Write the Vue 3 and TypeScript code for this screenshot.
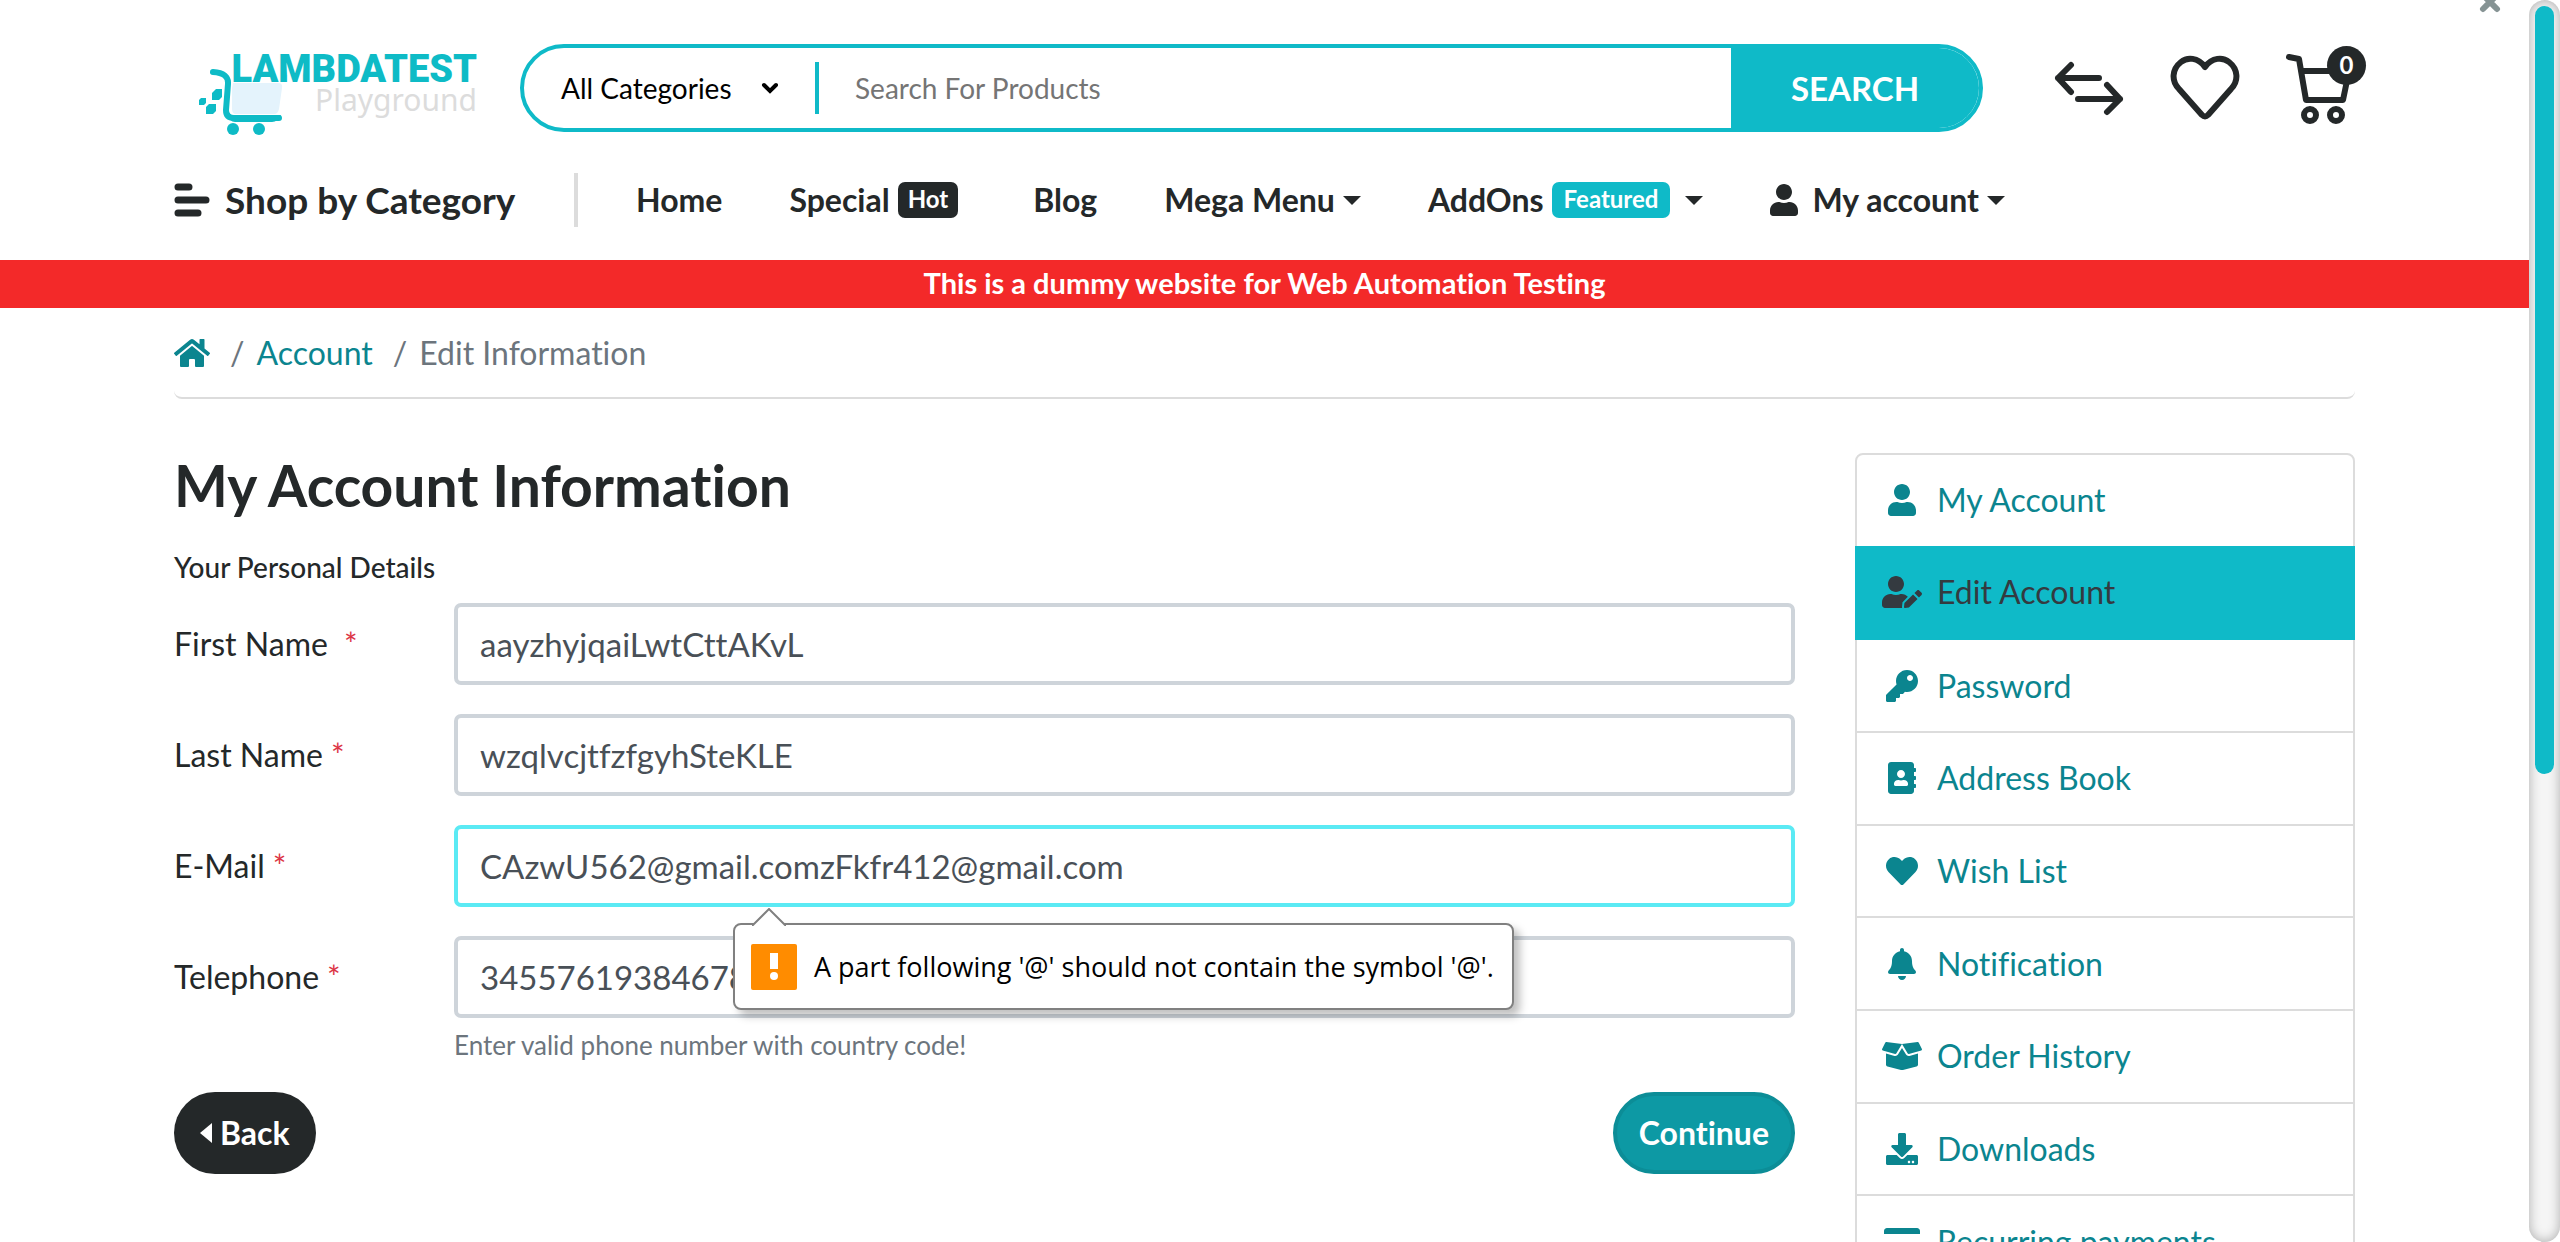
<script setup lang="ts">
interface NavItem {
  label: string
  badge?: string
  tone?: string
  caret?: boolean
  icon?: boolean
}

interface Field {
  id: string
  label: string
  type: string
  value: string
  hint?: string
  focused?: boolean
}

interface SideLink {
  label: string
  width: number
  path: string
  active?: boolean
}

const userPath =
  'M224 256c70.700 0 128-57.300 128-128S294.700 0 224 0 96 57.300 96 128s57.300 128 128 128zm89.600 32h-16.700c-22.200 10.200-46.900 16-72.900 16s-50.600-5.800-72.900-16h-16.700C60.200 288 0 348.200 0 422.400V464c0 26.500 21.500 48 48 48h352c26.500 0 48-21.500 48-48v-41.600c0-74.200-60.200-134.400-134.400-134.400z'

const nav: NavItem[] = [
  { label: 'Home' },
  { label: 'Special', badge: 'Hot', tone: 'dark' },
  { label: 'Blog' },
  { label: 'Mega Menu', caret: true },
  { label: 'AddOns', badge: 'Featured', tone: 'teal', caret: true },
  { label: 'My account', caret: true, icon: true },
]

const fields: Field[] = [
  { id: 'firstname', label: 'First Name ', type: 'text', value: 'aayzhyjqaiLwtCttAKvL' },
  { id: 'lastname', label: 'Last Name', type: 'text', value: 'wzqlvcjtfzfgyhSteKLE' },
  { id: 'email', label: 'E-Mail', type: 'text', value: 'CAzwU562@gmail.comzFkfr412@gmail.com', focused: true },
  {
    id: 'telephone',
    label: 'Telephone',
    type: 'tel',
    value: '3455761938467812',
    hint: 'Enter valid phone number with country code!',
  },
]

const links: SideLink[] = [
  { label: 'My Account', width: 448, path: userPath },
  {
    label: 'Edit Account',
    width: 640,
    active: true,
    path: 'M224 256c70.700 0 128-57.300 128-128S294.700 0 224 0 96 57.300 96 128s57.300 128 128 128zm89.600 32h-16.700c-22.200 10.200-46.900 16-72.900 16s-50.600-5.800-72.900-16h-16.700C60.200 288 0 348.200 0 422.400V464c0 26.500 21.500 48 48 48h274.900c-2.400-6.800-3.400-14-2.600-21.300l6.800-60.900 1.200-11.100 7.900-7.900 77.300-77.300c-24.500-27.700-60-45.500-99.900-45.500zm45.300 145.300l-6.800 61c-1.100 10.200 7.500 18.800 17.600 17.600l60.900-6.800 137.900-137.900-71.700-71.700-137.900 137.800zM633 268.900L595.100 231c-9.300-9.300-24.500-9.300-33.800 0l-37.800 37.800-4.100 4.100 71.800 71.700 41.800-41.800c9.300-9.400 9.300-24.500 0-33.900z',
  },
  {
    label: 'Password',
    width: 512,
    path: 'M512 176.001C512 273.203 433.202 352 336 352c-11.220 0-22.190-1.062-32.827-3.069l-24.012 27.014A23.999 23.999 0 0 1 261.223 384H224v40c0 13.255-10.745 24-24 24h-40v40c0 13.255-10.745 24-24 24H24c-13.255 0-24-10.745-24-24v-78.059c0-6.365 2.529-12.470 7.029-16.971l161.802-161.802C163.108 213.814 160 195.271 160 176 160 78.798 238.797.001 335.999 0 433.488-.001 512 78.511 512 176.001zM336 128c0 26.510 21.490 48 48 48s48-21.490 48-48-21.490-48-48-48-48 21.490-48 48z',
  },
  {
    label: 'Address Book',
    width: 448,
    path: 'M436 160c6.600 0 12-5.400 12-12v-40c0-6.600-5.400-12-12-12h-20V48c0-26.500-21.500-48-48-48H48C21.500 0 0 21.500 0 48v416c0 26.500 21.500 48 48 48h320c26.500 0 48-21.500 48-48v-48h20c6.600 0 12-5.400 12-12v-40c0-6.600-5.400-12-12-12h-20v-64h20c6.600 0 12-5.400 12-12v-40c0-6.600-5.400-12-12-12h-20v-64h20zm-228-32c35.300 0 64 28.700 64 64s-28.700 64-64 64-64-28.700-64-64 28.700-64 64-64zm112 236.800c0 10.600-10 19.200-22.400 19.200H118.400C106 384 96 375.400 96 364.800v-19.200c0-31.800 30.100-57.600 67.200-57.600h5c12.300 5.100 25.700 8 39.800 8s27.600-2.900 39.800-8h5c37.100 0 67.200 25.800 67.200 57.600v19.200z',
  },
  {
    label: 'Wish List',
    width: 512,
    path: 'M462.300 62.600C407.500 15.900 326 24.300 275.700 76.200L256 96.500l-19.700-20.300C186.100 24.300 104.500 15.900 49.700 62.600c-62.800 53.600-66.100 149.800-9.900 207.900l193.500 199.800c12.500 12.900 32.800 12.900 45.300 0l193.500-199.800c56.300-58.100 53-154.300-9.800-207.900z',
  },
  {
    label: 'Notification',
    width: 448,
    path: 'M224 512c35.320 0 63.970-28.650 63.970-64H160.030c0 35.350 28.650 64 63.970 64zm215.390-149.710c-19.320-20.760-55.470-51.990-55.470-154.290 0-77.700-54.480-139.900-127.940-155.160V32c0-17.670-14.320-32-31.980-32s-31.980 14.330-31.980 32v20.840C118.560 68.100 64.080 130.300 64.080 208c0 102.300-36.150 133.530-55.470 154.290-6 6.450-8.660 14.160-8.610 21.710.11 16.400 12.980 32 32.100 32h383.800c19.120 0 32-15.600 32.100-32 .05-7.550-2.610-15.270-8.610-21.710z',
  },
  {
    label: 'Order History',
    width: 640,
    path: 'M425.700 256c-16.900 0-32.800-9-41.400-23.400L320 126l-64.200 106.600c-8.700 14.500-24.600 23.500-41.500 23.500-4.500 0-9-.6-13.300-1.900L64 215v178c0 14.700 10 27.500 24.200 31l216.200 54.100c10.200 2.500 20.900 2.500 31 0L551.800 424c14.200-3.600 24.200-16.400 24.200-31V215l-137 39.100c-4.300 1.300-8.800 1.900-13.300 1.900zm212.600-112.200L586.800 41c-3.100-6.200-9.800-9.800-16.700-8.900L320 64l91.700 152.100c3.800 6.300 11.400 9.300 18.500 7.300l197.900-56.500c9.900-2.900 14.700-13.900 10.200-23.100zM53.200 41L1.700 143.800c-4.600 9.200.3 20.200 10.100 23l197.900 56.500c7.100 2 14.700-1 18.500-7.300L320 64 69.800 32.100c-6.900-.8-13.500 2.700-16.600 8.900z',
  },
  {
    label: 'Downloads',
    width: 512,
    path: 'M216 0h80c13.300 0 24 10.700 24 24v168h87.700c17.800 0 26.700 21.500 14.100 34.100L269.700 378.300c-7.500 7.500-19.800 7.500-27.300 0L90.100 226.100c-12.600-12.600-3.700-34.100 14.100-34.100H192V24c0-13.300 10.700-24 24-24zm296 376v112c0 13.300-10.700 24-24 24H24c-13.300 0-24-10.700-24-24V376c0-13.300 10.700-24 24-24h146.700l49 49c20.100 20.100 52.500 20.100 72.600 0l49-49H488c13.300 0 24 10.700 24 24zm-124 88c0-11-9-20-20-20s-20 9-20 20 9 20 20 20 20-9 20-20zm64 0c0-11-9-20-20-20s-20 9-20 20 9 20 20 20 20-9 20-20z',
  },
  {
    label: 'Recurring payments',
    width: 576,
    path: 'M0 432c0 26.500 21.500 48 48 48h480c26.500 0 48-21.500 48-48V256H0v176zm192-68c0-6.600 5.400-12 12-12h136c6.600 0 12 5.400 12 12v40c0 6.600-5.400 12-12 12H204c-6.600 0-12-5.400-12-12v-40zM576 80v48H0V80c0-26.500 21.500-48 48-48h480c26.500 0 48 21.500 48 48z',
  },
]
</script>

<template>
  <div class="shell">
    <div class="page">
      <button class="close" type="button" aria-label="Close">
        <svg viewBox="0 0 22 22" width="22" height="22"><path d="M4 4l14 14M18 4L4 18" /></svg>
      </button>

      <header class="header">
        <a class="logo" href="#" aria-label="LambdaTest Playground">
          <svg class="logo-cart" viewBox="0 0 86 70" width="86" height="70">
            <path d="M36 15h45q5 0 4 5l-3 21q-1 5-5 5H39q-4 0-4-5V20z" fill="#e4f3fc" />
            <path d="M16 4q16 1 15 12l-2 26q0 8 8 8h45" class="cart-line" />
            <path d="M32 47h52q-3 7-9 7H38q-6 0-6-7z" />
            <circle cx="36" cy="61" r="6" />
            <circle cx="62" cy="61" r="6" />
            <path d="M19 21h6v8l-3 3h-7v-7z" />
            <path d="M4 30h5v5l-2 2H2v-5z" />
            <path d="M12 36h7v7l-3 3H9v-7z" />
          </svg>
          <span class="logo-name">LAMBDATEST</span>
          <span class="logo-sub">Playground</span>
        </a>

        <form class="search" @submit.prevent>
          <button class="category" type="button">
            All Categories
            <svg viewBox="0 0 18 12" width="18" height="12"><path d="M3 3l6 6 6-6" /></svg>
          </button>
          <input class="query" type="text" aria-label="Search For Products" placeholder="Search For Products" />
          <button class="go" type="submit">SEARCH</button>
        </form>

        <div class="tools">
          <a href="#" aria-label="Compare">
            <svg viewBox="0 0 70 70" width="70" height="70">
              <path d="M17 12L4 25l13 14M4 25h41M53 32l13 14-13 13M66 46H24" />
            </svg>
          </a>
          <a href="#" aria-label="Wish list">
            <svg viewBox="0 0 70 70" width="70" height="70">
              <path
                class="heart"
                d="M35 14C28 4 17 4 11 9C2 16 1 28 9 36L32 62q3 3 6 0L61 36C69 28 68 16 59 9C53 4 42 4 35 14z"
              />
            </svg>
          </a>
          <a class="cart" href="#" aria-label="Cart">
            <svg viewBox="0 0 70 78" width="70" height="78">
              <path d="M3 8l10 2 7 41h37l6-29H15" />
              <circle cx="24" cy="66" r="6" />
              <circle cx="50" cy="66" r="6" />
            </svg>
            <span class="count">0</span>
          </a>
        </div>
      </header>

      <nav class="nav">
        <a class="shop" href="#">
          <svg viewBox="0 0 36 34" width="36" height="34">
            <path d="M4 4h11M4 17h28M4 30h20" />
          </svg>
          Shop by Category
        </a>
        <ul class="menu">
          <li v-for="item in nav" :key="item.label">
            <a href="#">
              <svg v-if="item.icon" class="nav-user" viewBox="0 0 448 512" width="28" height="32"><path :d="userPath" /></svg>
              {{ item.label }}
              <span v-if="item.badge" class="badge" :class="item.tone">{{ item.badge }}</span>
              <span v-if="item.caret" class="caret" :class="{ far: item.badge }"></span>
            </a>
          </li>
        </ul>
      </nav>

      <p class="notice">This is a dummy website for Web Automation Testing</p>

      <main class="content">
        <ol class="crumbs">
          <li>
            <a href="#" aria-label="Home">
              <svg viewBox="0 0 576 512" width="36" height="32">
                <path
                  d="M280.370 148.260L96 300.110V464a16 16 0 0 0 16 16l112.060-.29a16 16 0 0 0 15.920-16V368a16 16 0 0 1 16-16h64a16 16 0 0 1 16 16v95.640a16 16 0 0 0 16 16.050L464 480a16 16 0 0 0 16-16V300L295.670 148.260a12.190 12.190 0 0 0-15.300 0zM571.600 251.470L488 182.560V44.050a12 12 0 0 0-12-12h-56a12 12 0 0 0-12 12v72.610L318.470 43a48 48 0 0 0-61 0L4.340 251.470a12 12 0 0 0-1.600 16.900l25.500 31A12 12 0 0 0 45.150 301l235.220-193.740a12.190 12.190 0 0 1 15.300 0L530.900 301a12 12 0 0 0 16.900-1.600l25.500-31a12 12 0 0 0-1.700-16.930z"
                />
              </svg>
            </a>
          </li>
          <li><a href="#">Account</a></li>
          <li>Edit Information</li>
        </ol>

        <div class="columns">
          <form class="account" novalidate @submit.prevent>
            <h1>My Account Information</h1>
            <fieldset>
              <legend>Your Personal Details</legend>
              <div v-for="field in fields" :key="field.id" class="row">
                <label :for="field.id"><span class="label-text">{{ field.label }}</span><span class="star">*</span></label>
                <div class="control">
                  <input :id="field.id" :type="field.type" :value="field.value" :class="{ focused: field.focused }" />
                  <small v-if="field.hint">{{ field.hint }}</small>
                  <div v-if="field.focused" class="bubble" role="alert">
                    <svg class="bubble-tip" viewBox="0 0 34 18" width="34" height="18">
                      <path d="M0 18L17 1l17 17" />
                    </svg>
                    <svg class="bubble-mark" viewBox="0 0 46 46" width="46" height="46">
                      <rect width="46" height="46" rx="2" fill="#ff8c00" />
                      <path d="M19 9h8v16h-8z" fill="#fff" />
                      <circle cx="23" cy="32" r="4" fill="#fff" />
                    </svg>
                    A part following '@' should not contain the symbol '@'.
                  </div>
                </div>
              </div>
            </fieldset>
            <div class="actions">
              <a class="back" href="#">
                <svg viewBox="0 0 12 20" width="12" height="20"><path d="M12 0v20L0 10z" /></svg>
                Back
              </a>
              <button class="continue" type="submit">Continue</button>
            </div>
          </form>

          <aside class="side">
            <a v-for="link in links" :key="link.label" href="#" :class="{ active: link.active }">
              <span class="side-icon">
                <svg :viewBox="`0 0 ${link.width} 512`" :width="link.width / 16" height="32"><path :d="link.path" /></svg>
              </span>
              {{ link.label }}
            </a>
          </aside>
        </div>
      </main>
    </div>

    <div class="track"><div class="thumb"></div></div>
  </div>
</template>

<style>
body {
  margin: 0;
  background: #fff;
}
</style>

<style scoped>
.shell {
  display: grid;
  grid-template-columns: 1fr 31px;
  height: 100vh;
  overflow: hidden;
  font-family: Lato, "Noto Sans", sans-serif;
  font-size: 32px;
  line-height: 48px;
  font-variant-ligatures: none;
  color: #242829;
}
.shell * {
  box-sizing: border-box;
}
a {
  color: inherit;
  text-decoration: none;
}
button,
input {
  font: inherit;
  font-variant-ligatures: none;
  margin: 0;
}
svg {
  display: block;
  flex: none;
  fill: currentColor;
}
.page {
  position: relative;
  min-width: 0;
  overflow: hidden;
}
.close {
  position: absolute;
  top: -9px;
  right: 28px;
  padding: 0;
  border: 0;
  background: none;
}
.close path {
  stroke: #869394;
  stroke-width: 6;
  stroke-linecap: round;
}
.header {
  display: flex;
  align-items: center;
  height: 176px;
  padding: 0 173px 0 175px;
}
.logo {
  position: relative;
  width: 345px;
  height: 88px;
  display: flex;
  flex-direction: column;
  align-items: flex-end;
  padding: 7px 43px 0 0;
  color: #0ebbc6;
}
.logo-cart {
  position: absolute;
  left: 22px;
  top: 24px;
}
.cart-line {
  fill: none;
  stroke: currentColor;
  stroke-width: 6;
  stroke-linecap: round;
}
.logo-name {
  position: relative;
  font: 900 38px/36px Roboto, sans-serif;
}
.logo-sub {
  position: relative;
  font: 30px/26px "Noto Sans", sans-serif;
  color: #dcdcdc;
}
.search {
  display: flex;
  align-items: center;
  flex: 1;
  height: 88px;
  border: 4px solid #0fbac8;
  border-radius: 44px;
  overflow: hidden;
  font-size: 28px;
}
.category {
  display: flex;
  align-items: center;
  justify-content: space-between;
  width: 295px;
  height: 52px;
  padding: 0 36px 0 37px;
  border: 0;
  border-right: 4px solid #0fbac8;
  background: none;
  color: #000;
}
.category path {
  fill: none;
  stroke: #000;
  stroke-width: 4;
  stroke-linecap: round;
}
.query {
  flex: 1;
  min-width: 0;
  height: 80px;
  padding: 0 36px;
  border: 0;
  outline: 0;
  background: none;
}
.query::placeholder {
  color: #757575;
  opacity: 1;
}
.go {
  width: 248px;
  height: 80px;
  padding: 0;
  border: 0;
  background: #0fbac8;
  color: #fff;
  font-size: 33px;
  font-weight: 700;
}
.tools {
  display: flex;
  align-items: center;
  gap: 46px;
  margin-left: 71px;
}
.tools svg {
  fill: none;
  stroke: #242829;
  stroke-width: 6;
  stroke-linecap: round;
  stroke-linejoin: round;
}
.cart {
  position: relative;
}
.count {
  position: absolute;
  left: 41px;
  top: -3px;
  width: 39px;
  height: 39px;
  border-radius: 50%;
  background: #242829;
  color: #fff;
  font-size: 24px;
  font-weight: 700;
  line-height: 38px;
  text-align: center;
}
.nav {
  display: flex;
  align-items: center;
  height: 84px;
  padding: 0 174px 36px 174px;
  font-weight: 700;
}
.nav a {
  display: flex;
  align-items: center;
  white-space: nowrap;
}
.nav .shop {
  width: 404px;
  height: 54px;
  gap: 15px;
  border-right: 4px solid #dcdcdc;
  font-size: 37px;
}
.shop path {
  fill: none;
  stroke: #242829;
  stroke-width: 7;
  stroke-linecap: round;
}
.menu {
  display: flex;
  gap: 67px;
  margin: 0;
  padding: 0 0 0 58px;
  list-style: none;
}
.nav-user {
  margin-right: 14px;
}
.badge {
  height: 36px;
  margin-left: 8px;
  padding: 0 10px;
  border-radius: 7px;
  background: #242829;
  color: #fff;
  font-size: 24px;
  line-height: 34px;
}
.badge.dark {
  margin-right: 8px;
}
.badge.teal {
  padding: 0 12px;
  background: #0fbac8;
}
.caret {
  margin-left: 8px;
  border: 9px solid transparent;
  border-top-color: #242829;
  border-bottom: 0;
}
.caret.far {
  margin-left: 15px;
}
.notice {
  margin: 0;
  padding-bottom: 2px;
  background: #f32929;
  color: #fff;
  font-size: 29px;
  font-weight: 700;
  line-height: 46px;
  text-align: center;
}
.content {
  padding: 0 174px;
}
.crumbs {
  display: flex;
  height: 91px;
  margin: 0 0 54px;
  padding: 0;
  list-style: none;
  border-bottom: 2px solid #dcdcdc;
  border-radius: 8px;
  color: #6c757d;
}
.crumbs li {
  display: flex;
  align-items: center;
}
.crumbs li + li::before {
  content: "/";
  padding: 0 12px 0 20px;
}
.crumbs a {
  color: #0b858f;
}
.columns {
  display: grid;
  grid-template-columns: 1fr 500px;
  align-items: start;
  gap: 60px;
}
h1 {
  margin: 0;
  font-size: 57px;
  line-height: 64px;
  font-weight: 700;
}
fieldset {
  min-width: 0;
  margin: 0;
  padding: 0;
  border: 0;
}
legend {
  width: 100%;
  padding: 26px 0 12px;
  font-size: 28px;
  font-weight: 500;
}
.row {
  display: grid;
  grid-template-columns: 280px 1fr;
  margin-bottom: 29px;
}
label {
  height: 82px;
  line-height: 82px;
}
.label-text {
  white-space: pre;
}
.star {
  margin-left: 8px;
  color: #dc3545;
}
.control {
  position: relative;
  display: flex;
  flex-direction: column;
  font-size: 33px;
}
.control input {
  width: 100%;
  height: 82px;
  padding: 0 22px;
  border: 4px solid #ced4da;
  border-radius: 7px;
  outline: 0;
  background: #fff;
  color: #495057;
}
.control .focused {
  border-color: #5beaf4;
}
small {
  margin-top: 9px;
  font-size: 26px;
  line-height: 36px;
  color: #6c757d;
}
.bubble {
  position: absolute;
  z-index: 2;
  left: 279px;
  top: 98px;
  display: flex;
  align-items: center;
  gap: 17px;
  height: 87px;
  padding: 0 18px 0 16px;
  border: 2px solid #808080;
  border-radius: 8px;
  background: #fff;
  box-shadow: 6px 6px 8px rgba(0, 0, 0, 0.25);
  color: #000;
  font-family: "Open Sans", sans-serif;
  font-size: 27px;
  white-space: nowrap;
}
.bubble-tip {
  position: absolute;
  left: 17px;
  top: -17px;
  fill: #fff;
  stroke: #808080;
  stroke-width: 2;
}
.actions {
  display: flex;
  justify-content: space-between;
}
.back,
.continue {
  display: flex;
  align-items: center;
  height: 82px;
  padding: 0 26px;
  border: 0;
  border-radius: 41px;
  background: #242829;
  color: #fff;
  font-weight: 700;
}
.back {
  gap: 8px;
}
.continue {
  padding: 0 22px;
  border: 4px solid #0c8d97;
  background: #0d99a4;
}
.side {
  display: grid;
  grid-auto-rows: 1fr;
  min-height: 838px;
  border: 2px solid #dcdcdc;
  border-radius: 8px;
  color: #0b858f;
}
.side a {
  display: flex;
  align-items: center;
  gap: 15px;
  padding-left: 25px;
  border-bottom: 2px solid #dcdcdc;
}
.side .active {
  margin: -2px -2px 0;
  padding-left: 27px;
  border-color: #0fbac8;
  background: #0fbac8;
  color: #343a40;
}
.side-icon {
  display: flex;
  justify-content: center;
  width: 40px;
}
.track {
  background: #f5f5f5;
  box-shadow: inset 0 0 12px rgba(0, 0, 0, 0.3);
  border-radius: 20px;
  padding: 6px;
}
.thumb {
  height: 768px;
  border-radius: 10px;
  background: #0fbac8;
}
</style>
